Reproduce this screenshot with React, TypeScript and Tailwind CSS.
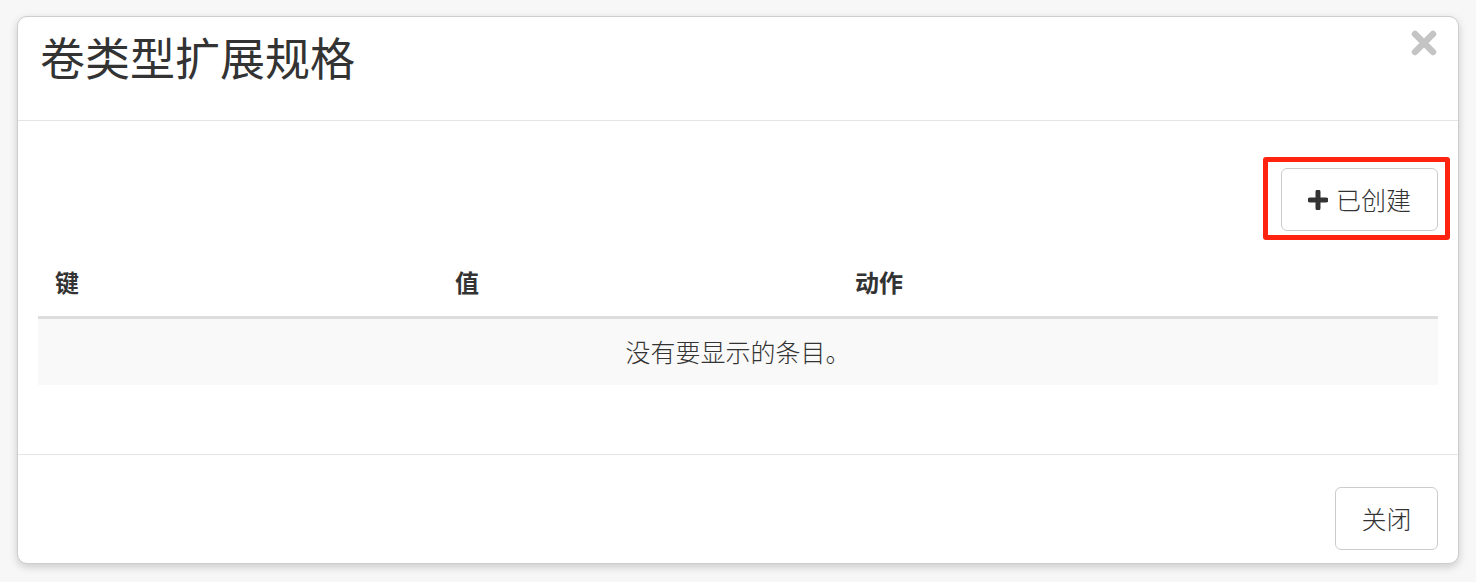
const font = { fontFamily: '"Noto Sans CJK SC", "Noto Sans", sans-serif' };

function CloseIcon() {
  return (
    <svg width="28" height="28" viewBox="0 0 28 28">
      <path d="M5 5 L23 23 M23 5 L5 23" stroke="#c4c4c4" strokeWidth="6.5" strokeLinecap="round" />
    </svg>
  );
}

function PlusIcon() {
  return (
    <svg width="20" height="20" viewBox="0 0 20 20">
      <path d="M10 2 V18 M2 10 H18" stroke="#333" strokeWidth="5" strokeLinecap="round" />
    </svg>
  );
}

export default function App() {
  return (
    <div className="w-full h-[582px] bg-[#f7f7f7] pt-[16px] pl-[17px] pr-[17px]" style={font}>
      <div className="w-[1442px] h-[548px] bg-white rounded-[10px] border border-[#cdcdcd] shadow-[0_3px_8px_rgba(0,0,0,0.18)] flex flex-col text-[#333]">
        <div className="h-[104px] border-b border-[#e5e5e5] flex items-start justify-between pl-[22px] pr-[20px]">
          <h1 className="text-[45px] leading-none mt-[17px] font-normal">卷类型扩展规格</h1>
          <button className="mt-[12px]">
            <CloseIcon />
          </button>
        </div>
        <div className="h-[334px] border-b border-[#e5e5e5] px-[20px] pt-[47px]">
          <div className="flex justify-end">
            <div className="relative">
              <button className="w-[157px] h-[63px] border border-[#cccccc] rounded-[6px] flex items-center justify-center gap-[8px] text-[25px] font-light bg-white">
                <PlusIcon />
                <span>已创建</span>
              </button>
              <span className="absolute left-[-18px] right-[-12px] top-[-11px] bottom-[-9px] border-[5px] border-[#ff2410] rounded-[3px]"></span>
            </div>
          </div>
          <table className="w-full mt-[17px] border-collapse">
            <thead>
              <tr className="border-b-[3px] border-[#dddddd]">
                <th className="w-[400px] text-left font-bold text-[24px] pl-[17px] h-[69px] align-middle">键</th>
                <th className="w-[400px] text-left font-bold text-[24px] pl-[17px] align-middle">值</th>
                <th className="text-left font-bold text-[24px] pl-[17px] align-middle">动作</th>
              </tr>
            </thead>
            <tbody>
              <tr className="bg-[#f9f9f9]">
                <td colSpan={3} className="h-[68px] text-center text-[25px] font-light align-middle">没有要显示的条目。</td>
              </tr>
            </tbody>
          </table>
        </div>
        <div className="flex justify-end px-[20px] pt-[32px]">
          <button className="w-[103px] h-[63px] border border-[#cccccc] rounded-[6px] text-[25px] font-light bg-white">关闭</button>
        </div>
      </div>
    </div>
  );
}
